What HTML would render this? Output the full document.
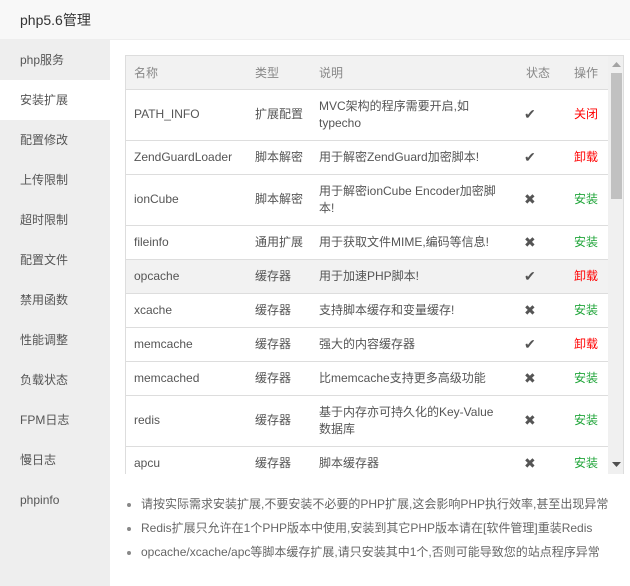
<!DOCTYPE html>
<html><head><meta charset="utf-8"><style>
*{margin:0;padding:0;box-sizing:border-box}
body{width:630px;height:586px;overflow:hidden;background:#fff;font-family:"Liberation Sans","Noto Sans CJK SC",sans-serif;font-size:12px;color:#555;position:relative}
.hd{position:absolute;left:0;top:0;width:630px;height:40px;background:#f8f8f8;border-bottom:1px solid #eee;font-size:14px;color:#333;line-height:40px;padding-left:20px}
.sb{position:absolute;left:0;top:40px;width:110px;height:546px;background:#eee}
.sb div{height:40px;line-height:40px;padding-left:20px;color:#555;font-size:12px}
.sb div.on{background:#fff}
.box{position:absolute;left:125px;top:55px;width:499px;height:419px;overflow:hidden;border:1px solid #ddd;border-bottom:none}
table{border-collapse:collapse;width:482px;table-layout:fixed}
th{background:#f2f2f2;color:#888;font-weight:normal;height:33px;text-align:left;padding-left:8px;border-bottom:1px solid #ddd}
td{padding-left:8px;border-bottom:1px solid #ddd;color:#555;line-height:17px;height:34px}
td.d{white-space:nowrap}
td.t{height:51px}
tr.h td{background:#f2f2f2}
.r{color:#f00}.g{color:#20a53a}
td.r,td.g,th.o{padding-left:11px}
.ic{font-size:14px;color:#555;padding-left:6px}
.scr{position:absolute;left:482px;top:0;width:17px;height:419px;background:#f0f0f0}
.th{position:absolute;left:3px;top:17px;width:11px;height:126px;background:#c1c1c1}
ul{position:absolute;left:127px;top:494px;list-style:none;color:#666}
li{height:24px;line-height:20px;position:relative;padding-left:14px}
li:before{content:"";position:absolute;left:0;top:9px;width:4px;height:4px;border-radius:2px;background:#888}
</style></head><body>
<div class="hd">php5.6管理</div>
<div class="sb">
<div>php服务</div><div class="on">安装扩展</div><div>配置修改</div><div>上传限制</div><div>超时限制</div><div>配置文件</div><div>禁用函数</div><div>性能调整</div><div>负载状态</div><div>FPM日志</div><div>慢日志</div><div>phpinfo</div>
</div>
<div class="box">
<table>
<colgroup><col style="width:121px"><col style="width:64px"><col style="width:207px"><col style="width:45px"><col style="width:45px"></colgroup>
<tr><th>名称</th><th>类型</th><th>说明</th><th>状态</th><th class="o">操作</th></tr>
<tr><td class="t">PATH_INFO</td><td>扩展配置</td><td class="d">MVC架构的程序需要开启,如<br>typecho</td><td class="ic">✔</td><td class="r">关闭</td></tr>
<tr><td>ZendGuardLoader</td><td>脚本解密</td><td class="d">用于解密ZendGuard加密脚本!</td><td class="ic">✔</td><td class="r">卸载</td></tr>
<tr><td class="t">ionCube</td><td>脚本解密</td><td class="d">用于解密ionCube Encoder加密脚<br>本!</td><td class="ic">✖</td><td class="g">安装</td></tr>
<tr><td>fileinfo</td><td>通用扩展</td><td class="d">用于获取文件MIME,编码等信息!</td><td class="ic">✖</td><td class="g">安装</td></tr>
<tr class="h"><td>opcache</td><td>缓存器</td><td class="d">用于加速PHP脚本!</td><td class="ic">✔</td><td class="r">卸载</td></tr>
<tr><td>xcache</td><td>缓存器</td><td class="d">支持脚本缓存和变量缓存!</td><td class="ic">✖</td><td class="g">安装</td></tr>
<tr><td>memcache</td><td>缓存器</td><td class="d">强大的内容缓存器</td><td class="ic">✔</td><td class="r">卸载</td></tr>
<tr><td>memcached</td><td>缓存器</td><td class="d">比memcache支持更多高级功能</td><td class="ic">✖</td><td class="g">安装</td></tr>
<tr><td class="t">redis</td><td>缓存器</td><td class="d">基于内存亦可持久化的Key-Value<br>数据库</td><td class="ic">✖</td><td class="g">安装</td></tr>
<tr><td>apcu</td><td>缓存器</td><td class="d">脚本缓存器</td><td class="ic">✖</td><td class="g">安装</td></tr>
</table>
<div class="scr"><div class="th"></div>
<svg style="position:absolute;left:4px;top:6px" width="9" height="5"><path d="M0 5L4.5 0L9 5z" fill="#a3a3a3"/></svg>
<svg style="position:absolute;left:4px;top:406px" width="9" height="5"><path d="M0 0L4.5 5L9 0z" fill="#505050"/></svg>
</div>
</div>
<ul>
<li>请按实际需求安装扩展,不要安装不必要的PHP扩展,这会影响PHP执行效率,甚至出现异常</li>
<li>Redis扩展只允许在1个PHP版本中使用,安装到其它PHP版本请在[软件管理]重装Redis</li>
<li>opcache/xcache/apc等脚本缓存扩展,请只安装其中1个,否则可能导致您的站点程序异常</li>
</ul>
</body></html>
